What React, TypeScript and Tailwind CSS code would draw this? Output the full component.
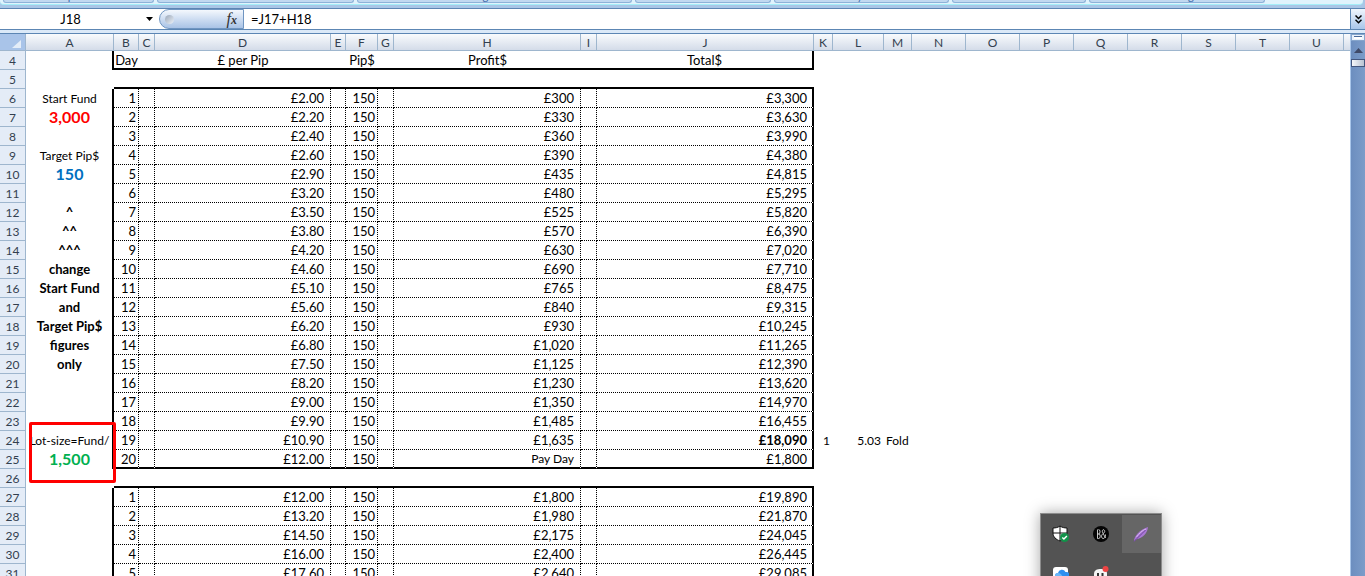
import type { ReactNode } from "react"

type Row = { n: number; cells?: string[]; edge?: boolean }

const columns: [string, string][] = [
  ["A", "w-[88px]"], ["B", "w-[25px]"], ["C", "w-[16px]"], ["D", "w-[176px]"],
  ["E", "w-[15px]"], ["F", "w-[32px]"], ["G", "w-[16px]"], ["H", "w-[187px]"],
  ["I", "w-[16px]"], ["J", "w-[217px]"], ["K", "w-[19px]"], ["L", "w-[51px]"],
  ["M", "w-[28px]"], ["N", "w-[54px]"], ["O", "w-[54px]"], ["P", "w-[54px]"],
  ["Q", "w-[54px]"], ["R", "w-[54px]"], ["S", "w-[54px]"], ["T", "w-[54px]"],
  ["U", "w-[54px]"],
]

const ribbonGroups = ["Clipboard", "Font", "Alignment", "Number", "Styles", "Cells", "Editing"]

const note = (text: string) => <span className="text-[13px] leading-4 font-bold">{text}</span>
const label = (text: string) => <span className="text-xs leading-[18px]">{text}</span>

const sideNotes: Record<number, ReactNode> = {
  6: label("Start Fund"),
  7: <span className="text-base leading-4 font-bold text-[#ff0000]">3,000</span>,
  9: label("Target Pip$"),
  10: <span className="text-base leading-4 font-bold text-[#0070c0]">150</span>,
  12: note("^"),
  13: note("^^"),
  14: note("^^^"),
  15: note("change"),
  16: note("Start Fund"),
  17: note("and"),
  18: note("Target Pip$"),
  19: note("figures"),
  20: note("only"),
  24: label("Lot-size=Fund/"),
  25: <span className="text-base leading-4 font-bold text-[#00b050]">1,500</span>,
}

// day, £ per pip, profit, total
const days: [string, string, string, string][] = [
  ["1", "£2.00", "£300", "£3,300"],
  ["2", "£2.20", "£330", "£3,630"],
  ["3", "£2.40", "£360", "£3,990"],
  ["4", "£2.60", "£390", "£4,380"],
  ["5", "£2.90", "£435", "£4,815"],
  ["6", "£3.20", "£480", "£5,295"],
  ["7", "£3.50", "£525", "£5,820"],
  ["8", "£3.80", "£570", "£6,390"],
  ["9", "£4.20", "£630", "£7,020"],
  ["10", "£4.60", "£690", "£7,710"],
  ["11", "£5.10", "£765", "£8,475"],
  ["12", "£5.60", "£840", "£9,315"],
  ["13", "£6.20", "£930", "£10,245"],
  ["14", "£6.80", "£1,020", "£11,265"],
  ["15", "£7.50", "£1,125", "£12,390"],
  ["16", "£8.20", "£1,230", "£13,620"],
  ["17", "£9.00", "£1,350", "£14,970"],
  ["18", "£9.90", "£1,485", "£16,455"],
  ["19", "£10.90", "£1,635", "£18,090"],
  ["20", "£12.00", "Pay Day", "£1,800"],
]

const nextDays: [string, string, string, string][] = [
  ["1", "£12.00", "£1,800", "£19,890"],
  ["2", "£13.20", "£1,980", "£21,870"],
  ["3", "£14.50", "£2,175", "£24,045"],
  ["4", "£16.00", "£2,400", "£26,445"],
  ["5", "£17.60", "£2,640", "£29,085"],
]

const rows: Row[] = [
  { n: 5, edge: true },
  ...days.map((cells, i) => ({ n: i + 6, cells, edge: i === days.length - 1 })),
  { n: 26, edge: true },
  ...nextDays.map((cells, i) => ({ n: i + 27, cells })),
]

function RowHeader({ n }: { n: number }) {
  return (
    <th scope="row" className="h-[19px] border-r border-b border-[#9eb6ce] bg-[#e4ecf7] p-0 pt-px text-center text-xs leading-[17px] font-normal text-[#333f4f]">
      {n}
    </th>
  )
}

function SheetRow({ row }: { row: Row }) {
  const { n, cells, edge } = row
  const bottom = edge ? "border-b-2 border-b-black" : cells ? "border-b border-b-black [border-bottom-style:dotted]" : ""
  const cell = `h-[19px] p-0 pt-px text-right align-top text-[13px] leading-4 ${bottom}`
  const dotted = cells ? "border-r border-r-black [border-right-style:dotted]" : ""

  return (
    <tr>
      <RowHeader n={n} />
      <td className={`p-0 pl-px whitespace-nowrap ${cells ? "border-r-2 border-black" : ""}`}>
        <div className="flex h-[18px] items-start justify-center overflow-hidden">{sideNotes[n]}</div>
      </td>
      <td className={`${cell} ${dotted} pr-0.5`}>{cells?.[0]}</td>
      <td className={`${cell} ${dotted}`} />
      <td className={`${cell} ${dotted} pr-1.5`}>{cells?.[1]}</td>
      <td className={`${cell} ${dotted}`} />
      <td className={`${cell} ${dotted} pr-0.5`}>{cells && "150"}</td>
      <td className={`${cell} ${dotted}`} />
      <td className={`${cell} ${dotted} pr-1.5`}>
        {cells?.[2] === "Pay Day" ? <span className="block text-xs leading-4">Pay Day</span> : cells?.[2]}
      </td>
      <td className={`${cell} ${dotted}`} />
      <td className={`${cell} pr-[5px] ${cells ? "border-r-2 border-r-black" : ""} ${n === 24 ? "font-bold" : ""}`}>{cells?.[3]}</td>
      <td className="p-0 pr-[3px] text-right text-xs">{n === 24 && "1"}</td>
      <td className="p-0 pr-[3px] text-right text-xs">{n === 24 && "5.03"}</td>
      <td className="p-0 pl-0.5 text-left text-xs">{n === 24 && "Fold"}</td>
      <td colSpan={9} />
    </tr>
  )
}

function Ribbon() {
  return (
    <div className="h-[9px] border-b border-[#5c86b4] bg-[#a9c6e6]">
      <div className="mr-0.5 h-[5px] rounded-b border-b border-[#a4eef8] bg-[#e0f3fc]">
        <div className="grid grid-cols-[151px_197px_275px_136px_175px_134px_176px] gap-[3px] pl-[3px]">
          {ribbonGroups.map((name) => (
            <div
              key={name}
              className="flex h-[3px] items-end justify-center overflow-hidden rounded-b-[3px] border border-t-0 border-[#8db2d8] bg-[#c1d9f0] text-[11px] leading-3 text-[#3e6aaa]"
            >
              {name}
            </div>
          ))}
        </div>
      </div>
    </div>
  )
}

function FormulaBar() {
  return (
    <div className="flex h-[21px] border-b border-[#5c86b4] bg-white">
      <label className="flex w-[159px] items-center">
        <input aria-label="Name box" defaultValue="J18" className="w-[141px] text-center text-[13px] leading-5 outline-none" />
        <svg className="ml-[5px] h-1 w-[7px]" viewBox="0 0 7 4"><path d="M0 0h7L3.5 4z" fill="#000" /></svg>
      </label>
      <div className="flex w-[85px] items-center justify-between rounded-l-full border-y border-r border-l border-[#6f95c1] bg-linear-to-b from-[#f4f8fd] to-[#a9c3e6] pr-1.5 pl-[5px]">
        <span className="size-[9px] rounded-full bg-linear-to-br from-[#9aa7b8] to-[#eef3fa]" />
        <button type="button" aria-label="Insert function" className="font-['Liberation_Serif',serif] text-base leading-4 text-[#333] italic">
          f<span className="text-xs font-bold">x</span>
        </button>
      </div>
      <input aria-label="Formula" defaultValue="=J17+H18" className="min-w-0 flex-1 pl-[7px] text-[13px] leading-5 outline-none" />
      <button type="button" aria-label="Expand formula bar" className="flex w-[15px] items-center justify-center border-l border-[#5c86b4] bg-linear-to-b from-[#f0f6fd] to-[#a9c6ea]">
        <svg className="h-[9px] w-[7px]" viewBox="0 0 7 9" fill="none" stroke="#000" strokeWidth="1.5"><path d="M.5.5l3 3 3-3M.5 4.800l3 3 3-3" /></svg>
      </button>
    </div>
  )
}

function Scrollbar() {
  return (
    <div className="flex w-[15px] shrink-0 flex-col border-l border-[#a9c6ea] bg-linear-to-r from-[#6c8ebf] to-[#7c9cc9]">
      <div className="flex h-[7px] items-center justify-center border border-[#86a5cc] bg-[#e8f1fb]">
        <span className="h-[3px] w-2 border-t border-[#47699a] bg-white" />
      </div>
      <button type="button" aria-label="Scroll up" className="flex h-[18px] items-center justify-center">
        <svg className="h-[5px] w-[9px]" viewBox="0 0 9 5"><path d="M4.500 0L9 5H0z" fill="#3f4a68" /></svg>
      </button>
      <div className="h-2 border border-[#43577f] bg-linear-to-r from-[#f5f7fa] to-[#b9c3d3]" />
    </div>
  )
}

function TrayPopup() {
  return (
    <div className="absolute top-[513px] left-[1040px] grid h-32 w-[122px] grid-cols-3 grid-rows-[38px_38px_38px] gap-x-px border border-[#8c8c8c] bg-[#535353] pt-px shadow-[0_0_14px_rgba(0,0,0,0.35)]">
      <div className="flex items-center justify-center">
        <svg className="size-[18px]" viewBox="0 0 18 18">
          <path d="M8 1c2 1.500 4.500 2 7 2v5c0 4-3 6.500-7 8-4-1.500-7-4-7-8V3c2.500 0 5-.5 7-2z" fill="#fff" stroke="#111" />
          <path d="M8 1v15M1 8h14" stroke="#111" />
          <circle cx="12.500" cy="12.500" r="4.500" fill="#12934a" />
          <path d="M10.300 12.500l1.600 1.600 3-3.200" fill="none" stroke="#fff" strokeWidth="1.400" />
        </svg>
      </div>
      <div className="flex items-center justify-center">
        <svg className="size-4" viewBox="0 0 16 16">
          <circle cx="8" cy="8" r="8" fill="#050505" />
          <path d="M4.500 3.500v9h1.200a1.500 2.200 0 0 0 0-4.500H4.500M5.500 8a1.500 2.200 0 0 0 0-4.500M12.500 8.500c0 2.500-1 4-2.200 4S8.500 11.500 8.500 10.300 9.500 8 10.500 7.300s1.200-1.300 1.200-2-.5-1.600-1.200-1.600-1.200.7-1.200 1.600S10.500 8 12.500 12" fill="none" stroke="#ddd" strokeWidth=".9" />
        </svg>
      </div>
      <div className="flex items-center justify-center bg-[#666]">
        <svg className="size-4" viewBox="0 0 16 16">
          <path d="M1 15.500c0-5 5-11.500 14-14.500-.5 6-5 11-12 12.500z" fill="#a877d2" />
          <path d="M3.500 11C6 7.500 9 4.500 13 3" fill="none" stroke="#d9b8f2" />
          <path d="M1 15.500C5 11 9 8 12.500 4" fill="none" stroke="#7044a0" />
        </svg>
      </div>
      <div className="flex justify-center pt-[14px]">
        <svg className="size-4" viewBox="0 0 16 16">
          <rect width="15" height="16" rx="3" fill="#fff" />
          <path d="M2 9a3 3 0 0 1 3-3 4 4 0 0 1 7.500-1 4 4 0 0 1 1 8H3z" fill="#2e8ff0" />
          <path d="M2 9a3 3 0 0 1 3-3c3 0 5 3 5 7H3z" fill="#6bb8fa" />
        </svg>
      </div>
      <div className="flex justify-center pt-[13px]">
        <svg className="size-[18px]" viewBox="0 0 18 18">
          <path d="M2 8c0-4 3-5 7-5s6 1 6 5v8H2z" fill="#f5f5f5" />
          <path d="M6 7v3M10.500 7v3" stroke="#333" strokeWidth="2" />
          <circle cx="13.500" cy="3" r="3" fill="#ee4444" />
        </svg>
      </div>
    </div>
  )
}

export default function App() {
  const heading = "h-[19px] border-b-2 border-black p-0 pt-px text-center align-top text-[13px] leading-4"
  return (
    <div className="relative flex h-screen flex-col overflow-hidden bg-white font-[Lato,sans-serif] text-[13px] text-black">
      <Ribbon />
      <FormulaBar />
      <div className="h-1 shrink-0 border-b border-[#5c86b4] bg-[#dbe9f8]" />
      <div className="flex min-h-0 flex-1">
        <div className="min-w-0 flex-1 overflow-hidden">
          <table className="w-full table-fixed border-separate border-spacing-0">
            <colgroup>
              <col className="w-[26px]" />
              {columns.map(([name, width]) => (
                <col key={name} className={width} />
              ))}
              <col />
            </colgroup>
            <thead>
              <tr className="text-[#333f4f]">
                <th className="h-[17px] border-r border-b border-[#9eb6ce] bg-[#a9c4e9] p-0">
                  <svg className="mt-1 mr-1 ml-auto h-2 w-[9px]" viewBox="0 0 9 8"><path d="M9 0v8H0z" fill="#e4edf8" /></svg>
                </th>
                {columns.map(([name]) => (
                  <th key={name} scope="col" className="h-[17px] border-r border-b border-[#9eb6ce] bg-linear-to-b from-[#f9fbfd] to-[#d4dce9] p-0 pt-0.5 text-center text-xs leading-[14px] font-normal">
                    {name}
                  </th>
                ))}
                <th className="h-[17px] border-b border-[#9eb6ce] bg-linear-to-b from-[#f9fbfd] to-[#d4dce9] p-0" />
              </tr>
            </thead>
            <tbody>
              <tr>
                <RowHeader n={4} />
                <td className="border-r-2 border-black p-0" />
                <td className={heading}>Day</td>
                <td className={heading} />
                <td className={heading}>£ per Pip</td>
                <td className={heading} />
                <td className={heading}>Pip$</td>
                <td className={heading} />
                <td className={heading}>Profit$</td>
                <td className={heading} />
                <td className={`${heading} border-r-2`}>Total$</td>
                <td colSpan={12} />
              </tr>
              {rows.map((row) => (
                <SheetRow key={row.n} row={row} />
              ))}
            </tbody>
          </table>
        </div>
        <Scrollbar />
      </div>
      <div className="absolute top-[422px] left-[29px] h-[61px] w-[87px] rounded-xs border-3 border-[#ff0000]" />
      <TrayPopup />
    </div>
  )
}
